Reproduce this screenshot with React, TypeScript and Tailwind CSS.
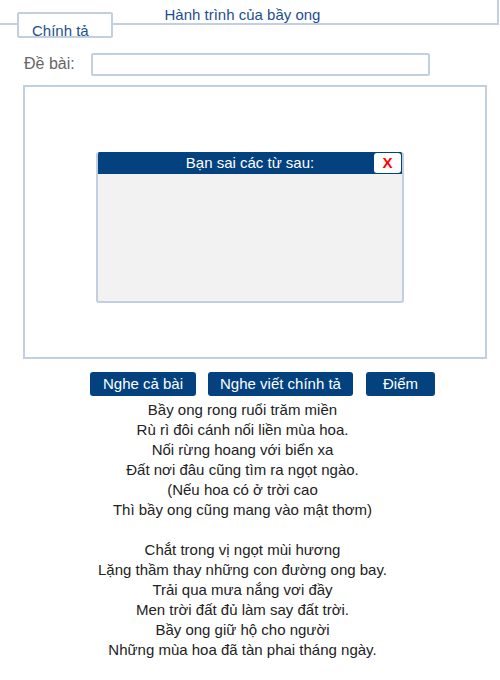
const POEM = [
  "Bầy ong rong ruổi trăm miền",
  "Rù rì đôi cánh nối liền mùa hoa.",
  "Nối rừng hoang với biển xa",
  "Đất nơi đâu cũng tìm ra ngọt ngào.",
  "(Nếu hoa có ở trời cao",
  "Thì bầy ong cũng mang vào mật thơm)",
  "",
  "Chắt trong vị ngọt mùi hương",
  "Lặng thầm thay những con đường ong bay.",
  "Trải qua mưa nắng vơi đầy",
  "Men trời đất đủ làm say đất trời.",
  "Bầy ong giữ hộ cho người",
  "Những mùa hoa đã tàn phai tháng ngày.",
];

export default function App() {
  return (
    <div className="w-[500px] h-[680px] bg-white font-['Liberation_Sans',Arial,sans-serif] overflow-hidden">
      <div className="w-[499px] h-[25px] border-r-2 border-b-2 border-[#c2cfe0]">
        <div className="w-[485px] pt-[6px] text-center text-[15px] leading-[17px] text-[#1d4f8e]">
          Hành trình của bầy ong
        </div>
      </div>
      <div className="ml-[17px] -mt-[13px] w-[96px] h-[26px] border-2 border-[#c2cfe0] rounded-[2px] bg-white pl-[13px] pt-[9px] text-[15px] leading-[16px] text-[#1d4f8e]">
        Chính tả
      </div>

      <div className="flex items-center mt-[14px] h-[24px]">
        <span className="ml-[24px] w-[67px] text-[16px] text-[#666666]">Đề bài:</span>
        <div className="w-[339px] h-[23px] border-2 border-[#c2cfe0] rounded-[2px]" />
      </div>

      <div className="ml-[23px] mt-[9px] w-[464px] h-[274px] border-2 border-[#c2cfe0]">
        <div className="ml-[71px] mt-[65px] w-[308px] h-[151px] border-2 border-t-0 border-[#c2cfe0] rounded-[3px] bg-[#f2f2f2] overflow-hidden">
          <div className="flex items-center h-[22px] bg-[#03417f]">
            <div className="flex-1 pl-[28px] text-center text-[15px] text-white">Bạn sai các từ sau:</div>
            <div className="w-[27px] h-[20px] mr-[1px] rounded-[3px] bg-white flex items-center justify-center text-[15px] font-bold text-[#ff0000]">
              X
            </div>
          </div>
        </div>
      </div>

      <div className="flex mt-[13px] pl-[90px] gap-[12px]">
        <button className="w-[106px] h-[24px] rounded-[3px] bg-[#03417f] text-[15px] text-white">
          Nghe cả bài
        </button>
        <button className="w-[145px] h-[24px] rounded-[3px] bg-[#03417f] text-[15px] text-white">
          Nghe viết chính tả
        </button>
        <button className="ml-[1px] w-[69px] h-[24px] rounded-[3px] bg-[#03417f] text-[15px] text-white">
          Điểm
        </button>
      </div>

      <div className="mt-[4px] w-[485px] text-center text-[15px] leading-[20px] text-[#222222]">
        {POEM.map((line, i) => (
          <div key={i} className="h-[20px]">
            {line}
          </div>
        ))}
      </div>
    </div>
  );
}
